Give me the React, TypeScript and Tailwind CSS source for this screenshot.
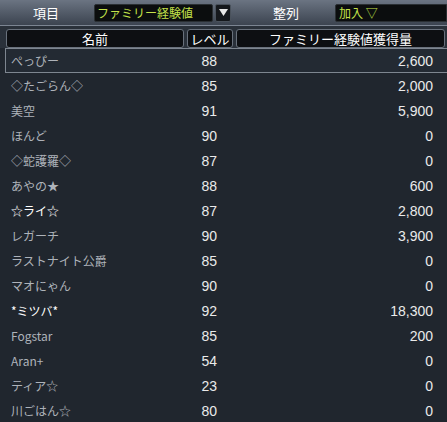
const rows: { name: string; level: number; exp: string; bright?: boolean }[] = [
  { name: 'ぺっぴー', level: 88, exp: '2,600' },
  { name: '◇たごらん◇', level: 85, exp: '2,000' },
  { name: '美空', level: 91, exp: '5,900' },
  { name: 'ほんど', level: 90, exp: '0' },
  { name: '◇蛇護羅◇', level: 87, exp: '0' },
  { name: 'あやの★', level: 88, exp: '600' },
  { name: '☆ライ☆', level: 87, exp: '2,800', bright: true },
  { name: 'レガーチ', level: 90, exp: '3,900' },
  { name: 'ラストナイト公爵', level: 85, exp: '0' },
  { name: 'マオにゃん', level: 90, exp: '0' },
  { name: '*ミツバ*', level: 92, exp: '18,300', bright: true },
  { name: 'Fogstar', level: 85, exp: '200' },
  { name: 'Aran+', level: 54, exp: '0' },
  { name: 'ティア☆', level: 23, exp: '0' },
  { name: '川ごはん☆', level: 80, exp: '0' },
]

const font = { fontFamily: '"Noto Sans CJK JP", "DejaVu Sans", sans-serif' }
const numFont = { fontFamily: '"Liberation Sans", Arial, sans-serif' }

export default function App() {
  return (
    <div
      className="w-[447px] h-[422px] overflow-hidden bg-[#20262e] text-[12px] leading-none"
      style={font}
    >
      {/* top filter bar */}
      <div className="h-[26px] flex items-center bg-gradient-to-b from-[#6b7482] to-[#3c4450] border-b border-[#7c8592]">
        <div className="w-[94px] pl-[33px] text-white text-[13px]">項目</div>
        <div className="w-[119px] h-[18px] bg-[#0b0d0e] border border-[#2a2f33] rounded-[2px] flex items-center pl-[2px] text-[#c4e24a]">
          ファミリー経験値
        </div>
        <div className="ml-[2px] w-[16px] h-[18px] bg-[#15181c] border border-[#4a525c] rounded-[2px] flex items-center justify-center">
          <svg width="9" height="7" viewBox="0 0 9 7">
            <path d="M0 0 H9 L4.5 7 Z" fill="#e8e8e8" />
          </svg>
        </div>
        <div className="ml-[42px] w-[62px] text-white text-[13px]">整列</div>
        <div className="flex-1 h-[18px] bg-[#0b0d0e] border border-[#2a2f33] rounded-l-[2px] flex items-center pl-[3px] text-[#c4e24a]">
          加入 ▽
        </div>
      </div>

      {/* column headers */}
      <div className="flex gap-[3px] pl-[6px] pr-[2px] pt-[3px] h-[22px] bg-[#2a313a]">
        <div className="w-[178px] h-[19px] bg-[#0d0f12] border border-[#69717c] rounded-[3px] flex items-center justify-center text-white text-[13px]">
          名前
        </div>
        <div className="w-[46px] h-[19px] bg-[#0d0f12] border border-[#69717c] rounded-[3px] flex items-center justify-center text-white text-[13px]">
          レベル
        </div>
        <div className="flex-1 h-[19px] bg-[#0d0f12] border border-[#69717c] rounded-[3px] flex items-center justify-center text-white text-[13px]">
          ファミリー経験値獲得量
        </div>
      </div>

      {/* rows */}
      <div className="flex flex-col">
        {rows.map((r, i) => (
          <div
            key={r.name}
            className={
              'h-[25px] ml-[5px] flex items-center ' +
              (i === 0 ? 'border border-[#7e8690] border-r-0 bg-[#232a33]' : 'border border-transparent')
            }
          >
            <div
              className={
                'w-[180px] pl-[5px] ' + (r.bright ? 'text-white' : 'text-[#aeb3ba]')
              }
            >
              {r.name}
            </div>
            <div className="w-[31px] text-right text-[#eaeaea] text-[14px]" style={numFont}>
              {r.level}
            </div>
            <div className="w-[216px] text-right text-[#eaeaea] text-[14px]" style={numFont}>
              {r.exp}
            </div>
          </div>
        ))}
      </div>
    </div>
  )
}
